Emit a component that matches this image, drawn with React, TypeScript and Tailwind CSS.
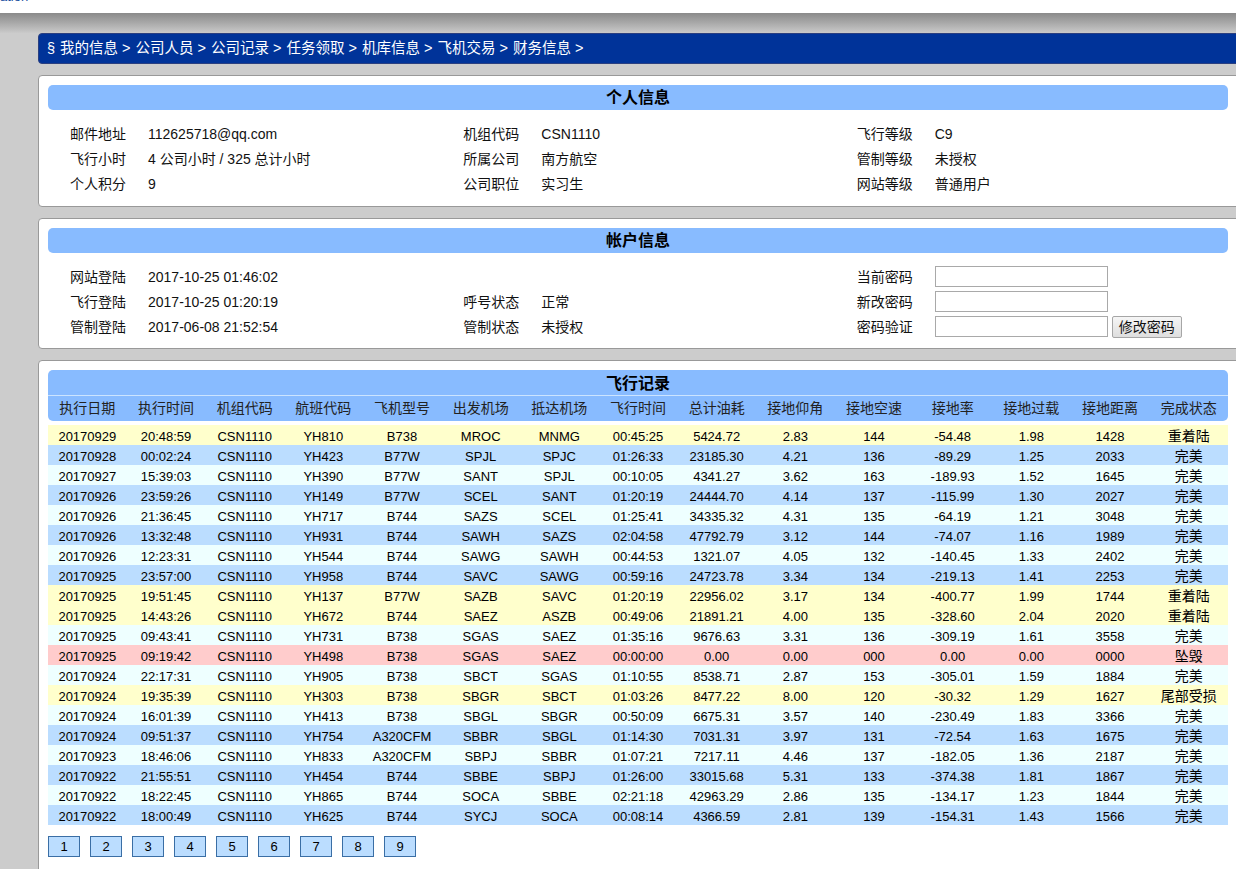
import React from "react";

type FlightRow = {
  date: string;
  time: string;
  crew: string;
  flight: string;
  plane: string;
  from: string;
  to: string;
  duration: string;
  fuel: string;
  pitch: string;
  speed: string;
  rate: string;
  gforce: string;
  distance: string;
  status: string;
};

const NAV = ["我的信息", "公司人员", "公司记录", "任务领取", "机库信息", "飞机交易", "财务信息"];

const COLUMNS = [
  "执行日期",
  "执行时间",
  "机组代码",
  "航班代码",
  "飞机型号",
  "出发机场",
  "抵达机场",
  "飞行时间",
  "总计油耗",
  "接地仰角",
  "接地空速",
  "接地率",
  "接地过载",
  "接地距离",
  "完成状态",
];

const RAW = `20170929 20:48:59 YH810 B738 MROC MNMG 00:45:25 5424.72 2.83 144 -54.48 1.98 1428 重着陆
20170928 00:02:24 YH423 B77W SPJL SPJC 01:26:33 23185.30 4.21 136 -89.29 1.25 2033 完美
20170927 15:39:03 YH390 B77W SANT SPJL 00:10:05 4341.27 3.62 163 -189.93 1.52 1645 完美
20170926 23:59:26 YH149 B77W SCEL SANT 01:20:19 24444.70 4.14 137 -115.99 1.30 2027 完美
20170926 21:36:45 YH717 B744 SAZS SCEL 01:25:41 34335.32 4.31 135 -64.19 1.21 3048 完美
20170926 13:32:48 YH931 B744 SAWH SAZS 02:04:58 47792.79 3.12 144 -74.07 1.16 1989 完美
20170926 12:23:31 YH544 B744 SAWG SAWH 00:44:53 1321.07 4.05 132 -140.45 1.33 2402 完美
20170925 23:57:00 YH958 B744 SAVC SAWG 00:59:16 24723.78 3.34 134 -219.13 1.41 2253 完美
20170925 19:51:45 YH137 B77W SAZB SAVC 01:20:19 22956.02 3.17 134 -400.77 1.99 1744 重着陆
20170925 14:43:26 YH672 B744 SAEZ ASZB 00:49:06 21891.21 4.00 135 -328.60 2.04 2020 重着陆
20170925 09:43:41 YH731 B738 SGAS SAEZ 01:35:16 9676.63 3.31 136 -309.19 1.61 3558 完美
20170925 09:19:42 YH498 B738 SGAS SAEZ 00:00:00 0.00 0.00 000 0.00 0.00 0000 坠毁
20170924 22:17:31 YH905 B738 SBCT SGAS 01:10:55 8538.71 2.87 153 -305.01 1.59 1884 完美
20170924 19:35:39 YH303 B738 SBGR SBCT 01:03:26 8477.22 8.00 120 -30.32 1.29 1627 尾部受损
20170924 16:01:39 YH413 B738 SBGL SBGR 00:50:09 6675.31 3.57 140 -230.49 1.83 3366 完美
20170924 09:51:37 YH754 A320CFM SBBR SBGL 01:14:30 7031.31 3.97 131 -72.54 1.63 1675 完美
20170923 18:46:06 YH833 A320CFM SBPJ SBBR 01:07:21 7217.11 4.46 137 -182.05 1.36 2187 完美
20170922 21:55:51 YH454 B744 SBBE SBPJ 01:26:00 33015.68 5.31 133 -374.38 1.81 1867 完美
20170922 18:22:45 YH865 B744 SOCA SBBE 02:21:18 42963.29 2.86 135 -134.17 1.23 1844 完美
20170922 18:00:49 YH625 B744 SYCJ SOCA 00:08:14 4366.59 2.81 139 -154.31 1.43 1566 完美`;

const ROWS: FlightRow[] = RAW.split("\n").map((line) => {
  const [date, time, flight, plane, from, to, duration, fuel, pitch, speed, rate, gforce, distance, status] =
    line.split(" ");
  return { date, time, crew: "CSN1110", flight, plane, from, to, duration, fuel, pitch, speed, rate, gforce, distance, status };
});

function rowColor(row: FlightRow, index: number) {
  if (row.status === "坠毁") return "bg-[#ffcccc]";
  if (row.status === "重着陆" || row.status === "尾部受损") return "bg-[#ffffcc]";
  return index % 2 === 0 ? "bg-[#eeffff]" : "bg-[#bbddff]";
}

function Field({ label, value }: { label: string; value?: React.ReactNode }) {
  return (
    <div className="flex h-[25px] items-center pt-px">
      <span className="w-[78px] shrink-0 pl-[22px] box-content">{label}</span>
      <span>{value}</span>
    </div>
  );
}

function PanelTitle({ title }: { title: string }) {
  return (
    <div className="flex h-[25px] items-center justify-center rounded-[5px] bg-[#88bbff] pt-px text-[16px] font-bold text-black">
      {title}
    </div>
  );
}

function PasswordField({ label, button }: { label: string; button?: boolean }) {
  return (
    <div className="flex h-[25px] items-center">
      <span className="w-[78px] shrink-0 pl-[22px] box-content pt-px">{label}</span>
      <input type="password" className="h-[21px] w-[173px] border border-[#a9a9a9] bg-white px-1 outline-none" />
      {button ? (
        <button
          type="button"
          className="ml-[4px] h-[22px] w-[70px] rounded-[2px] border border-[#a6a6a6] bg-gradient-to-b from-[#f6f6f6] to-[#dedede] text-[14px]"
        >
          修改密码
        </button>
      ) : null}
    </div>
  );
}

export default function App() {
  return (
    <div
      className="relative h-[869px] w-[1236px] overflow-hidden bg-[#cccccc] text-[14px] text-[#111]"
      style={{ fontFamily: '"Liberation Sans", "Noto Sans CJK SC", sans-serif' }}
    >
      <div className="h-[13px] overflow-hidden bg-white">
        <div className="-mt-[10px] text-[13px] leading-[14px] text-[#2050a0]">ation</div>
      </div>
      <div className="h-[20px] bg-gradient-to-b from-[#8a8a8a] to-[#cacaca]" />

      <div className="ml-[38px] w-[1210px]">
        <nav className="flex h-[31px] items-center rounded-l-[4px] border border-[#2a3f80] bg-[#003399] pl-[8px] pt-px text-[14.5px] text-white">
          <span>§</span>
          {NAV.map((item) => (
            <span key={item} className="ml-[5px]">
              {item} &gt;
            </span>
          ))}
        </nav>

        <section className="mt-[11px] rounded-[4px] border border-[#999] bg-white px-[9px] pt-[9px] pb-[10px]">
          <div className="w-[1180px]">
            <PanelTitle title="个人信息" />
            <div className="mt-[11px] grid grid-cols-3">
              <div>
                <Field label="邮件地址" value="112625718@qq.com" />
                <Field label="飞行小时" value="4 公司小时 / 325 总计小时" />
                <Field label="个人积分" value="9" />
              </div>
              <div>
                <Field label="机组代码" value="CSN1110" />
                <Field label="所属公司" value="南方航空" />
                <Field label="公司职位" value="实习生" />
              </div>
              <div>
                <Field label="飞行等级" value="C9" />
                <Field label="管制等级" value="未授权" />
                <Field label="网站等级" value="普通用户" />
              </div>
            </div>
          </div>
        </section>

        <section className="mt-[11px] rounded-[4px] border border-[#999] bg-white px-[9px] pt-[9px] pb-[9px]">
          <div className="w-[1180px]">
            <PanelTitle title="帐户信息" />
            <div className="mt-[11px] grid grid-cols-3">
              <div>
                <Field label="网站登陆" value="2017-10-25 01:46:02" />
                <Field label="飞行登陆" value="2017-10-25 01:20:19" />
                <Field label="管制登陆" value="2017-06-08 21:52:54" />
              </div>
              <div>
                <Field label="" value="" />
                <Field label="呼号状态" value="正常" />
                <Field label="管制状态" value="未授权" />
              </div>
              <div>
                <PasswordField label="当前密码" />
                <PasswordField label="新改密码" />
                <PasswordField label="密码验证" button />
              </div>
            </div>
          </div>
        </section>

        <section className="mt-[11px] h-[600px] rounded-[4px] border border-[#999] bg-white px-[9px] pt-[9px]">
          <div className="w-[1180px]">
            <div className="overflow-hidden rounded-[5px] bg-[#88bbff]">
              <div className="flex h-[25px] items-center justify-center pt-[2px] text-[16px] font-bold text-black">飞行记录</div>
              <div className="h-px bg-[#cce4ff]" />
              <div className="grid h-[25px] grid-cols-[repeat(15,minmax(0,1fr))] items-center text-[#222]">
                {COLUMNS.map((col) => (
                  <div key={col} className="text-center">
                    {col}
                  </div>
                ))}
              </div>
            </div>

            <div className="mt-[4px] text-[13px]">
              {ROWS.map((row, i) => (
                <div
                  key={row.date + row.time}
                  className={`grid h-[20px] grid-cols-[repeat(15,minmax(0,1fr))] items-center pt-px text-center text-black ${rowColor(row, i)}`}
                >
                  <div>{row.date}</div>
                  <div>{row.time}</div>
                  <div>{row.crew}</div>
                  <div>{row.flight}</div>
                  <div>{row.plane}</div>
                  <div>{row.from}</div>
                  <div>{row.to}</div>
                  <div>{row.duration}</div>
                  <div>{row.fuel}</div>
                  <div>{row.pitch}</div>
                  <div>{row.speed}</div>
                  <div>{row.rate}</div>
                  <div>{row.gforce}</div>
                  <div>{row.distance}</div>
                  <div className="text-[14px]">{row.status}</div>
                </div>
              ))}
            </div>

            <div className="mt-[11px] flex gap-[10px]">
              {[1, 2, 3, 4, 5, 6, 7, 8, 9].map((n) => (
                <button
                  key={n}
                  type="button"
                  className="h-[21px] w-[32px] border border-[#3a6ea5] bg-[#bbddff] text-[13px] text-black"
                >
                  {n}
                </button>
              ))}
            </div>
          </div>
        </section>
      </div>
    </div>
  );
}
